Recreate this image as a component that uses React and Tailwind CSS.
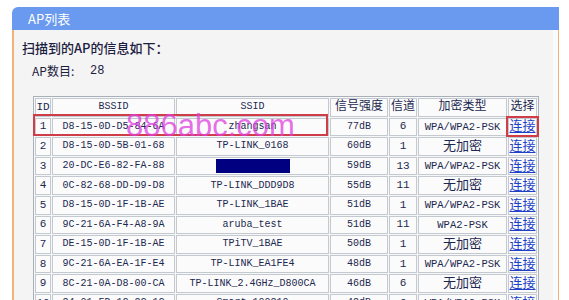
import React from "react";

const rows = [
  ["1", "D8-15-0D-D5-84-6A", "zhangsan", "77dB", "6", "WPA/WPA2-PSK"],
  ["2", "D8-15-0D-5B-01-68", "TP-LINK_0168", "60dB", "1", "无加密"],
  ["3", "20-DC-E6-82-FA-88", null, "59dB", "13", "WPA/WPA2-PSK"],
  ["4", "0C-82-68-DD-D9-D8", "TP-LINK_DDD9D8", "55dB", "11", "无加密"],
  ["5", "D8-15-0D-1F-1B-AE", "TP-LINK_1BAE", "51dB", "1", "WPA/WPA2-PSK"],
  ["6", "9C-21-6A-F4-A8-9A", "aruba_test", "51dB", "11", "WPA2-PSK"],
  ["7", "DE-15-0D-1F-1B-AE", "TPiTV_1BAE", "50dB", "1", "无加密"],
  ["8", "9C-21-6A-EA-1F-E4", "TP-LINK_EA1FE4", "48dB", "1", "WPA/WPA2-PSK"],
  ["9", "8C-21-0A-D8-00-CA", "TP-LINK_2.4GHz_D800CA", "46dB", "6", "无加密"],
  ["10", "24-01-FD-1C-2C-1C", "Smart_100210", "42dB", "6", "WPA/WPA2-PSK"],
];

const cell = "border border-[#c4c8cf] bg-[#fbfbfb] text-center p-0 leading-none";

export default function App() {
  return (
    <div className="w-[569px] h-[300px] overflow-hidden bg-white pt-[7px] pl-[12px] font-['Liberation_Mono','Noto_Sans_CJK_SC',monospace] text-[#1c2850]">
      <div className="w-[547px]">
        <div className="h-[23px] bg-[#6a9af0] rounded-tl-[6px] flex items-center pl-[16px] text-white text-[13px] font-['Noto_Sans_CJK_SC',sans-serif]">
          AP列表
        </div>
        <div className="h-[280px] border-l-2 border-r border-[#f2b27a] bg-[#f4f4f4] shadow-[inset_-5px_0_0_#f9fbfd] pl-[8px] pt-[10px]">
          <div className="text-[13px] leading-[16px] text-[#1c2040] font-['Noto_Sans_CJK_SC',sans-serif] font-medium">
            扫描到的AP的信息如下：
          </div>
          <div className="mt-[7px] ml-[10px] flex text-[12px] leading-[16px] text-[#1c2040]">
            <span className="w-[58px] font-['Noto_Sans_CJK_SC',sans-serif]">AP数目:</span>
            <span>28</span>
          </div>
          <div className="relative mt-[17px] ml-[11px] w-[505px]">
            <table className="w-[505px] table-fixed border-separate border-spacing-[1px] border border-[#aab0b8] bg-[#f6f7f8] text-[10px]">
              <colgroup>
                <col className="w-[16px]" />
                <col className="w-[123px]" />
                <col className="w-[153px]" />
                <col className="w-[58px]" />
                <col className="w-[28px]" />
                <col className="w-[89px]" />
                <col className="w-[29px]" />
              </colgroup>
              <thead>
                <tr className="h-[18.6px]">
                  <th className={cell + " font-normal text-[11px]"}>ID</th>
                  <th className={cell + " font-normal"}>BSSID</th>
                  <th className={cell + " font-normal"}>SSID</th>
                  <th className={cell + " font-normal text-[12px]"}>信号强度</th>
                  <th className={cell + " font-normal text-[12px]"}>信道</th>
                  <th className={cell + " font-normal text-[12px]"}>加密类型</th>
                  <th className={cell + " font-normal text-[12px]"}>选择</th>
                </tr>
              </thead>
              <tbody>
                {rows.map((r, i) => (
                  <tr key={r[0]} className="h-[18.6px]">
                    <td className={cell + " text-[11px]"}>{r[0]}</td>
                    <td className={cell}>{r[1]}</td>
                    <td className={cell}>
                      {r[2] === null ? (
                        <div className="mx-auto w-[74px] h-[14px] bg-[#000080]" />
                      ) : (
                        r[2]
                      )}
                    </td>
                    <td className={cell}>{r[3]}</td>
                    <td className={cell + " text-[11px]"}>{r[4]}</td>
                    <td className={cell + (r[5] === "无加密" ? " text-[13px]" : " text-[10.5px]")}>{r[5]}</td>
                    <td className={cell + " text-[13px]"}>
                      <span
                        className={
                          "text-[#2040c8] underline underline-offset-2 " +
                          (i === 0 ? "outline-2 outline-[#d23c46] outline-offset-[1px]" : "")
                        }
                      >
                        连接
                      </span>
                    </td>
                  </tr>
                ))}
              </tbody>
            </table>
            <div className="absolute left-0 top-[18px] w-[295px] h-[22px] border-2 border-[#cf3d48]" />
            <div className="absolute left-[93px] top-[14px] text-[31px] leading-[31px] text-[#e040e0]/75 font-['Liberation_Sans',Arial,sans-serif]">
              886abc.com
            </div>
          </div>
        </div>
      </div>
    </div>
  );
}
